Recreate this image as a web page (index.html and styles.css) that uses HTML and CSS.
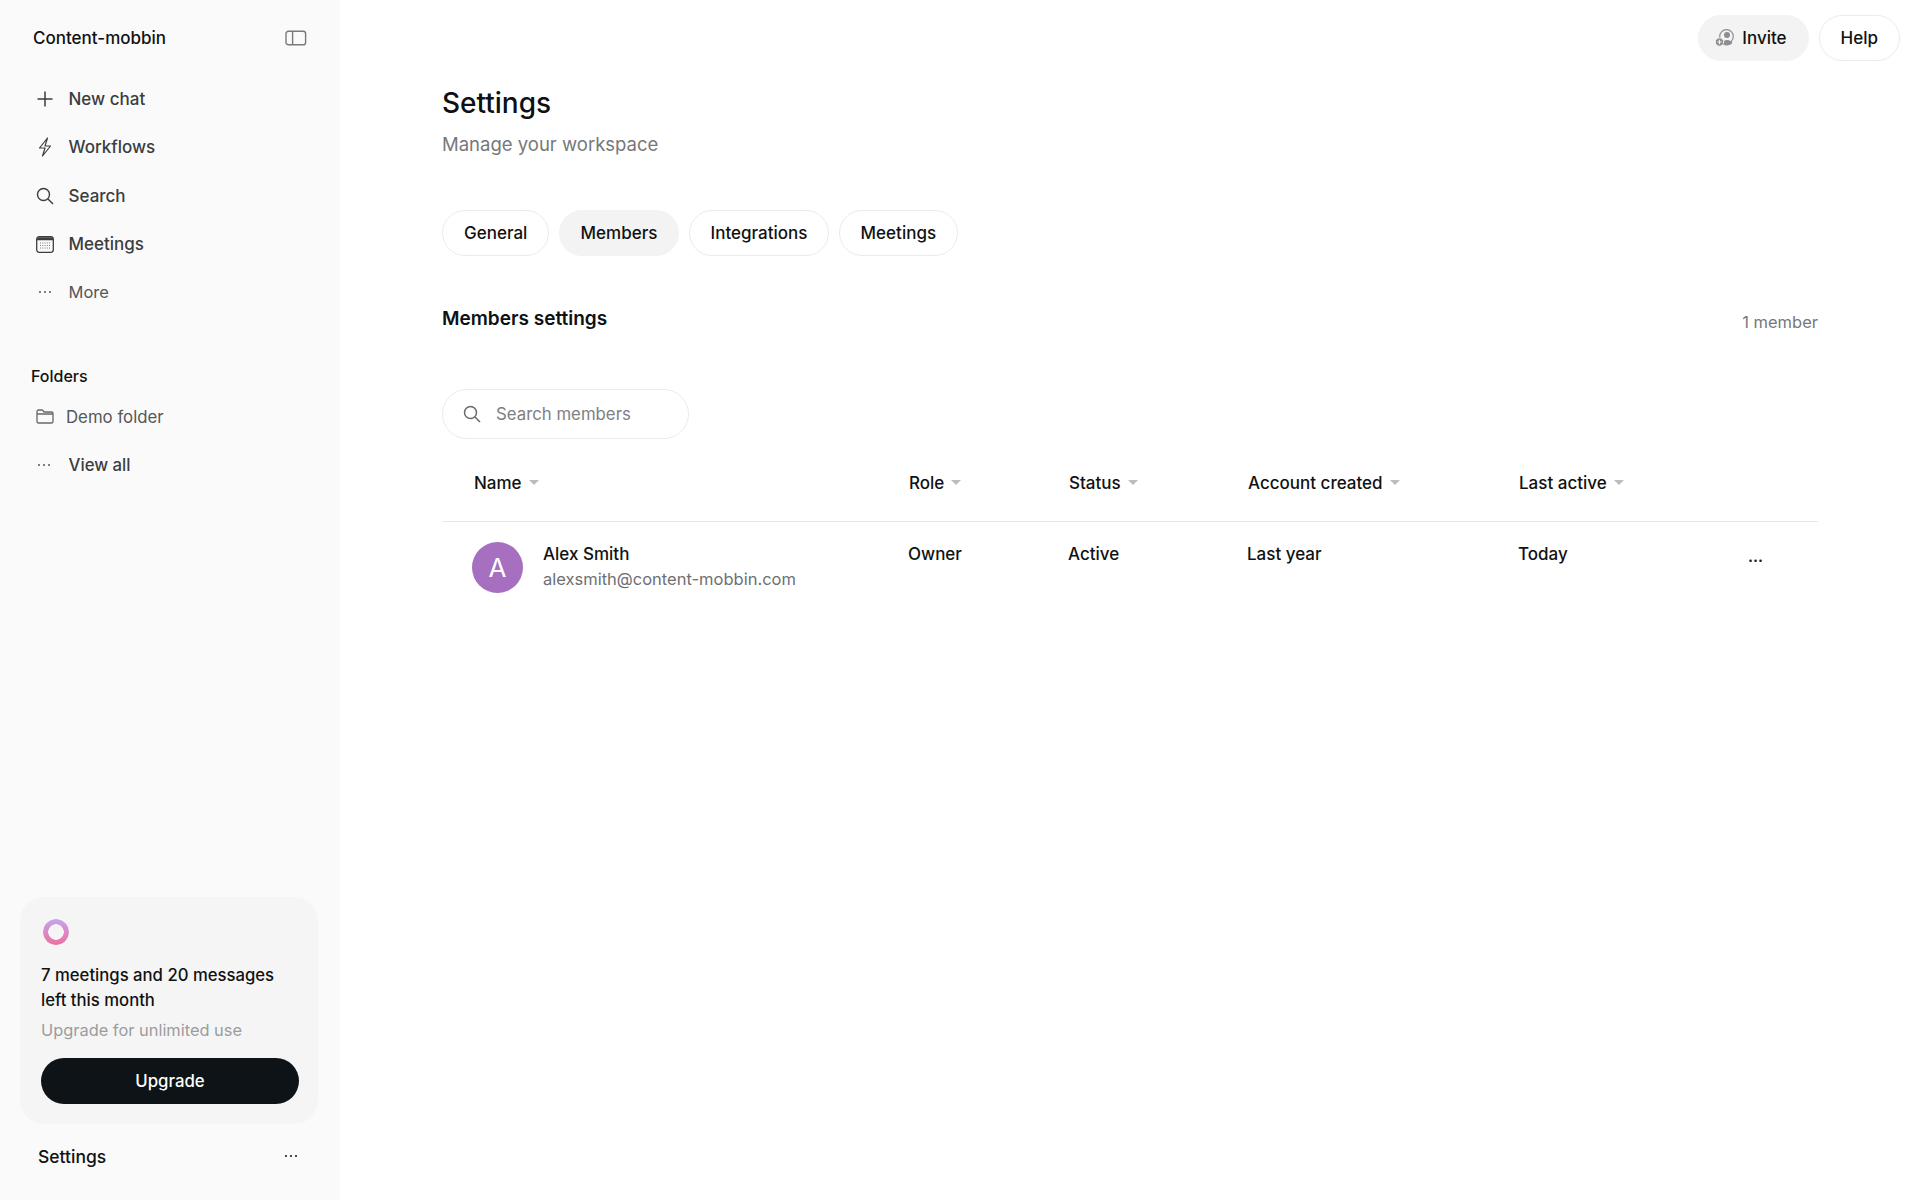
FILE: index.html
```html
<!DOCTYPE html>
<html lang="en">
<head>
<meta charset="utf-8">
<title>Settings</title>
<link rel="stylesheet" href="styles.css">
</head>
<body>
<div class="app">
  <aside class="sidebar">
    <div class="brand-row">
      <span class="brand">Content-mobbin</span>
      <svg class="toggle" width="22" height="16" viewBox="0 0 22 16" fill="none" stroke="#77797b" stroke-width="1.4"><rect x="1" y="1.2" width="19.6" height="13.6" rx="2.4"/><path d="M7.6 1.2v13.6"/></svg>
    </div>
    <nav class="nav">
      <a class="nav-item"><span class="nav-icon"><svg width="18" height="18" viewBox="0 0 18 18" fill="none" stroke="#3b3d3f" stroke-width="1.5"><path d="M9 1.5v15M1.5 9h15"/></svg></span>New chat</a>
      <a class="nav-item"><span class="nav-icon"><svg class="bolt" width="14" height="20" viewBox="0 0 14 20" fill="none" stroke="#3b3d3f" stroke-width="1.2" stroke-linejoin="round"><path d="M9.500 1 1.500 11H7l-2.500 8L12.500 9H7z"/></svg></span>Workflows</a>
      <a class="nav-item"><span class="nav-icon"><svg width="18" height="18" viewBox="0 0 18 18" fill="none" stroke="#3b3d3f" stroke-width="1.4"><circle cx="7.500" cy="7.500" r="6"/><path d="m12 12 5 5"/></svg></span>Search</a>
      <a class="nav-item"><span class="nav-icon"><svg width="18" height="17" viewBox="0 0 18 17"><rect x=".7" y=".7" width="16.600" height="15.600" rx="2.500" fill="#fafafa" stroke="#3b3d3f" stroke-width="1.300"/><path d="M1 3.200a2 2 0 0 1 2-2h12a2 2 0 0 1 2 2v1H1z" fill="#3b3d3f"/><path d="M4 7h10M4 9.500h10M4 12h10" stroke="#77797b" stroke-width="1" stroke-dasharray="1 1.250"/></svg></span>Meetings</a>
      <a class="nav-item nav-item-light"><span class="nav-icon"><svg class="dots" width="16" height="4" viewBox="0 0 16 4" fill="#55575a"><circle cx="3" cy="2" r="1"/><circle cx="8" cy="2" r="1"/><circle cx="13" cy="2" r="1"/></svg></span>More</a>
    </nav>
    <h2 class="folders-title">Folders</h2>
    <div class="folders">
      <a class="folder-item"><span class="folder-icon"><svg width="18" height="15" viewBox="0 0 18 15" fill="none" stroke="#66686a" stroke-width="1.300"><path d="M1 3.500V2.600C1 1.700 1.700 1 2.600 1h3.300c.5 0 .9.200 1.200.6L8 3h7.400c.9 0 1.600.7 1.600 1.600v7.800c0 .9-.7 1.600-1.600 1.600H2.600C1.700 14 1 13.300 1 12.400zM1 5h16"/></svg></span>Demo folder</a>
      <a class="nav-item view-all"><span class="nav-icon"><svg width="16" height="4" viewBox="0 0 16 4" fill="#55575a"><circle cx="3" cy="2" r="1"/><circle cx="8" cy="2" r="1"/><circle cx="13" cy="2" r="1"/></svg></span>View all</a>
    </div>
    <div class="sidebar-bottom">
      <section class="card">
        <div class="ring"></div>
        <p class="card-title">7 meetings and 20 messages left this month</p>
        <p class="card-sub">Upgrade for unlimited use</p>
        <button class="upgrade">Upgrade</button>
      </section>
      <div class="settings-row">
        <span>Settings</span>
        <svg width="14" height="4" viewBox="0 0 14 4" fill="#222"><circle cx="2" cy="2" r="1.100"/><circle cx="7" cy="2" r="1.100"/><circle cx="12" cy="2" r="1.100"/></svg>
      </div>
    </div>
  </aside>
  <main class="main">
    <header class="topbar">
      <button class="pill pill-active invite">
        <svg width="20" height="18" viewBox="0 0 20 18" fill="none"><circle cx="11.500" cy="7.500" r="6.800" stroke="#8b8d8f" stroke-width="1.200"/><circle cx="12" cy="6" r="3" fill="#8b8d8f"/><path d="M6.500 15.500c.6-3 3-4.500 5.500-4.500s4.900 1.500 5.500 3c-1.500 1.600-3.500 2.600-6 2.500z" fill="#8b8d8f"/><circle cx="4.500" cy="13" r="4.200" fill="#8b8d8f" stroke="#f3f3f3" stroke-width="1"/><path d="M4.500 10.800v4.400M2.300 13h4.400" stroke="#f3f3f3" stroke-width="1.100"/></svg>
        Invite
      </button>
      <button class="pill">Help</button>
    </header>
    <div class="content">
      <h1 class="title">Settings</h1>
      <p class="subtitle">Manage your workspace</p>
      <div class="tabs">
        <button class="pill">General</button>
        <button class="pill pill-active">Members</button>
        <button class="pill">Integrations</button>
        <button class="pill">Meetings</button>
      </div>
      <div class="section-head">
        <h2 class="section-title">Members settings</h2>
        <span class="count">1 member</span>
      </div>
      <div class="search-box">
        <svg width="18" height="18" viewBox="0 0 18 18" fill="none" stroke="#66686a" stroke-width="1.500"><circle cx="7.500" cy="7.500" r="6"/><path d="m12 12 5 5"/></svg>
        <span>Search members</span>
      </div>
      <div class="table-head">
        <span class="th">Name<i class="caret"></i></span>
        <span class="th">Role<i class="caret"></i></span>
        <span class="th">Status<i class="caret"></i></span>
        <span class="th">Account created<i class="caret"></i></span>
        <span class="th">Last active<i class="caret"></i></span>
      </div>
      <div class="table-row">
        <div class="member">
          <div class="avatar">A</div>
          <div class="member-text">
            <div class="member-name">Alex Smith</div>
            <div class="member-email">alexsmith@content-mobbin.com</div>
          </div>
        </div>
        <span class="td">Owner</span>
        <span class="td">Active</span>
        <span class="td">Last year</span>
        <span class="td">Today</span>
        <span class="row-menu">...</span>
      </div>
    </div>
  </main>
</div>
</body>
</html>
```
FILE: styles.css
```css
* { box-sizing: border-box; }
html, body { margin: 0; height: 100%; }
body {
  font-family: Inter, "Liberation Sans", sans-serif;
  color: #0d1114;
  background: #fff;
}
h1, h2, p { margin: 0; font-weight: 500; }
button { font: inherit; }

.app { display: flex; height: 1200px; }

.sidebar {
  width: 340px;
  flex: none;
  background: #fafafa;
  display: flex;
  flex-direction: column;
  padding: 26px 20px 0 20px;
}
.brand-row {
  display: flex;
  justify-content: space-between;
  align-items: center;
  height: 24px;
  padding: 0 13px;
  margin-bottom: 25px;
}
.brand { font-size: 17px; font-weight: 500; color: #111; }
.nav { display: flex; flex-direction: column; }
.nav-item {
  display: flex;
  align-items: center;
  height: 48.300px;
  font-size: 17px;
  font-weight: 500;
  color: #3b3d3f;
}
.nav-item-light { font-size: 16.500px; font-weight: 400; color: #55575a; }
.nav-icon {
  width: 48.500px;
  padding-left: 16px;
  flex: none;
  display: flex;
  justify-content: flex-start;
  align-items: center;
}
.bolt { margin-left: 2px; }
.dots { margin-left: 1px; }
.folders-title {
  font-size: 16px;
  font-weight: 500;
  color: #111;
  margin: 49px 0 0 11px;
  line-height: 22px;
}
.folders { display: flex; flex-direction: column; margin-top: 6px; }
.folder-item {
  display: flex;
  align-items: center;
  height: 47px;
  font-size: 16.800px;
  color: #55575a;
}
.folder-icon { width: 46px; padding-left: 16px; flex: none; display: flex; }
.view-all { font-size: 16.800px; }

.sidebar-bottom { margin-top: auto; }
.card {
  width: 298px;
  height: 227px;
  background: #f5f5f5;
  border-radius: 24px;
  padding: 22px 21px 0;
}
.ring {
  width: 26px;
  height: 26px;
  margin-left: 2px;
  border-radius: 50%;
  background: linear-gradient(180deg, #c4a6f0, #ee6f9e);
  -webkit-mask: radial-gradient(circle, transparent 7.500px, #000 8px);
  mask: radial-gradient(circle, transparent 7.500px, #000 8px);
}
.card-title {
  margin-top: 18px;
  font-size: 16.700px;
  line-height: 25px;
  font-weight: 500;
  color: #111;
}
.card-sub { margin-top: 5px; font-size: 16.400px; line-height: 25px; font-weight: 400; color: #9b9c9e; }
.upgrade {
  display: block;
  width: 258px;
  height: 46px;
  margin-top: 15px;
  border: 0;
  border-radius: 23px;
  background: #0d1316;
  color: #fff;
  font-size: 16.800px;
  font-weight: 500;
}
.settings-row {
  display: flex;
  justify-content: space-between;
  align-items: center;
  height: 24px;
  margin: 20px 0 32px;
  padding: 0 22px 0 18px;
  font-size: 17.500px;
  font-weight: 500;
  color: #111;
}

.main { flex: 1; min-width: 0; display: flex; flex-direction: column; }
.topbar {
  display: flex;
  justify-content: flex-end;
  gap: 10px;
  padding: 15px 20px 0 0;
}
.pill {
  height: 46px;
  padding: 0 21px;
  border: 1.500px solid #ebebeb;
  border-radius: 23px;
  background: #fff;
  color: #111;
  font-size: 17px;
  font-weight: 500;
  display: inline-flex;
  align-items: center;
}
.pill-active { background: #f3f3f3; border-color: #f3f3f3; }
.invite { gap: 7px; padding: 0 21px 0 16px; }

.content { padding: 0 102px; }
.title { margin-top: 22px; font-size: 28px; line-height: 40px; font-weight: 500; color: #0d1114; }
.subtitle { margin-top: 7px; font-size: 18.500px; line-height: 28px; font-weight: 400; color: #76787a; }
.tabs { display: flex; gap: 9.200px; margin-top: 52px; }
.section-head { display: flex; justify-content: space-between; align-items: flex-start; margin-top: 48px; }
.section-title { font-size: 19px; line-height: 30px; font-weight: 600; }
.count { margin-top: 6px; font-size: 16.500px; line-height: 24px; color: #76787a; }
.search-box {
  width: 247px;
  height: 50px;
  margin-top: 54.500px;
  padding: 0 20px;
  border: 1.500px solid #ebebeb;
  border-radius: 25px;
  display: flex;
  align-items: center;
  gap: 15px;
  font-size: 16.800px;
  color: #7e8082;
}
.table-head, .table-row {
  display: grid;
  grid-template-columns: 435px 160px 179px 271px 1fr;
}
.table-head {
  height: 83px;
  padding: 32px 0 0 32px;
  border-bottom: 1.500px solid #e8e8e8;
}
.th { font-size: 17px; line-height: 24px; font-weight: 500; display: flex; align-items: center; gap: 7px; color: #111; height: 24px; }
.caret {
  width: 0;
  height: 0;
  border-left: 5px solid transparent;
  border-right: 5px solid transparent;
  border-top: 5px solid #bcbcbc;
}
.table-row {
  grid-template-columns: 436px 160px 179px 271px 230px 1fr;
  padding: 20.500px 0 0 30px;
}
.member { display: flex; gap: 20px; }
.avatar {
  width: 51px;
  height: 51px;
  border-radius: 50%;
  background: #a66fbf;
  color: #fff;
  font-size: 26px;
  display: flex;
  align-items: center;
  justify-content: center;
}
.member-name { font-size: 17px; line-height: 24px; font-weight: 500; color: #111; }
.member-email { font-size: 16.500px; line-height: 24px; margin-top: 1px; color: #6e7072; }
.td { font-size: 17px; line-height: 24px; font-weight: 500; color: #111; }
.row-menu { font-size: 15px; line-height: 24px; font-weight: 700; margin-top: 3px; color: #222; }
```
